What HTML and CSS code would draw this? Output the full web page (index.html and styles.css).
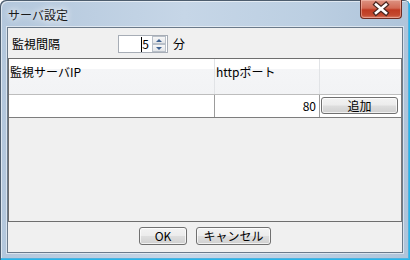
FILE: index.html
```html
<!DOCTYPE html>
<html>
    <head>
        <meta charset="utf-8" />
        <link rel="stylesheet" href="styles.css">
    </head>

    <body>
        <div class="window">
            <div class="titlebar">
                <span class="title">サーバ設定</span>
                <button class="close">
                    <svg width="42" height="19" viewBox="0 0 42 19">
                        <path d="M16 5.5 L26 14 M26 5.5 L16 14" stroke="#4a2620" stroke-width="5" stroke-linecap="square" fill="none" />
                        <path d="M16 5.5 L26 14 M26 5.5 L16 14" stroke="#fff" stroke-width="2.6" stroke-linecap="square" fill="none" />
                    </svg>
                </button>
            </div>

            <div class="client">
                <div class="toolbar">
                    <span class="label">監視間隔</span>
                    <div class="spin">
                        <div class="spin-value"><span class="caret"></span>5</div>
                        <div class="spin-buttons">
                            <span class="spin-up"><i></i></span>
                            <span class="spin-down"><i></i></span>
                        </div>
                    </div>
                    <span class="unit">分</span>
                </div>

                <div class="grid">
                    <div class="row header">
                        <div class="cell">監視サーバIP</div>
                        <div class="cell">httpポート</div>
                        <div class="cell"></div>
                    </div>
                    <div class="row data">
                        <div class="cell"></div>
                        <div class="cell num">80</div>
                        <div class="cell"><button class="btn add">追加</button></div>
                    </div>
                </div>

                <div class="footer">
                    <button class="btn ok">OK</button>
                    <button class="btn cancel">キャンセル</button>
                </div>
            </div>
        </div>
    </body>
</html>
```

FILE: styles.css
```css
body {
    margin: 0;
    font-family: "Noto Sans CJK JP", sans-serif;
    font-size: 12px;
    color: #000;
}

.window {
    width: 410px;
    height: 260px;
    box-sizing: border-box;
    padding: 0 7px 7px;
    display: flex;
    flex-direction: column;
    border-radius: 6px 6px 0 0;
    background: linear-gradient(to right, #b3c7dc, #c6d6e7 45%, #bccfe2 75%, #aec4da);
    box-shadow:
        inset 1px 1px 0 #4d5d6e,
        inset -1px -1px 0 #27b6ea,
        inset -2px -2px 0 #4fb2e0,
        inset 2px 2px 0 rgba(255, 255, 255, 0.55);
}

.titlebar {
    height: 27px;
    display: flex;
    align-items: flex-start;
}

.title {
    margin: 8px 0 0 1px;
    line-height: 14px;
    color: #1a1a1a;
    text-shadow: 0 0 6px #fff, 0 0 10px #fff;
}

.close {
    margin-left: auto;
    margin-right: 1px;
    width: 42px;
    height: 19px;
    padding: 0;
    border: 1px solid #6f2c22;
    border-top: none;
    border-radius: 0 0 4px 4px;
    background: linear-gradient(#dd9382, #d26a55 45%, #bf3a22 55%, #c44a30 85%, #d9806a);
    box-shadow: inset 0 0 0 1px rgba(255, 210, 200, 0.45);
    display: block;
}

.close svg {
    display: block;
    margin: -1px 0 0 -1px;
}

.client {
    flex: 1;
    display: flex;
    flex-direction: column;
    background: #f0f0f0;
    border: 1px solid #6b7a8a;
    box-shadow: 0 0 0 1px rgba(255, 255, 255, 0.5);
}

.toolbar {
    height: 30px;
    box-sizing: border-box;
    padding: 2px 0 0 4px;
    display: flex;
    align-items: center;
}

.label {
    width: 106px;
    line-height: 14px;
}

.spin {
    width: 50px;
    height: 18px;
    box-sizing: border-box;
    border: 1px solid #a7adb6;
    background: #fff;
    display: flex;
}

.spin-value {
    flex: 1;
    display: flex;
    align-items: center;
    justify-content: flex-end;
    padding-right: 2px;
    line-height: 14px;
}

.caret {
    width: 1px;
    height: 15px;
    background: #000;
}

.spin-buttons {
    width: 14px;
    margin: 0 1px;
    display: flex;
    flex-direction: column;
}

.spin-up,
.spin-down {
    flex: 1;
    box-sizing: border-box;
    border: 1px solid #b9c0c9;
    background: linear-gradient(#f7f7f7, #e3e5e8);
    display: flex;
    align-items: center;
    justify-content: center;
}

.spin-up i {
    border-left: 3px solid transparent;
    border-right: 3px solid transparent;
    border-bottom: 3px solid #3d6191;
}

.spin-down i {
    border-left: 3px solid transparent;
    border-right: 3px solid transparent;
    border-top: 3px solid #3d6191;
}

.unit {
    margin-left: 5px;
    line-height: 14px;
}

.grid {
    height: 164px;
    box-sizing: border-box;
    border: 1px solid #6e6e6e;
    border-right-color: #7a7a7a;
}

.row {
    display: grid;
    grid-template-columns: 206px 105px 1fr;
}

.cell {
    box-sizing: border-box;
    line-height: 14px;
}

.header {
    height: 35px;
    border-bottom: 1px solid #bdbdbd;
    background: linear-gradient(#fff 0, #fff 28%, #f4f5f7 28%, #f2f3f5 100%);
}

.header .cell {
    padding: 6px 0 0 1px;
    border-right: 1px solid #e1e3e6;
}

.header .cell:last-child {
    border-right: none;
}

.data {
    height: 22px;
    border-bottom: 1px solid #7d7d7d;
    background: #fff;
}

.data .cell {
    border-right: 1px solid #9c9c9c;
    padding-top: 4px;
}

.data .cell:last-child {
    border-right: none;
    padding: 2px 0 0 1px;
}

.num {
    text-align: right;
    padding-right: 3px;
}

.footer {
    height: 30px;
    box-sizing: border-box;
    padding-top: 5px;
    display: flex;
    justify-content: center;
    align-items: flex-start;
    gap: 9px;
}

.btn {
    height: 18px;
    box-sizing: border-box;
    padding: 0;
    font-family: "Noto Sans CJK JP", sans-serif;
    font-size: 12px;
    line-height: 14px;
    color: #000;
    border: 1px solid #707070;
    border-radius: 3px;
    background: linear-gradient(#f3f3f3, #ececec 48%, #dedede 52%, #d0d0d0);
    box-shadow: inset 0 0 0 1px rgba(255, 255, 255, 0.7);
}

.add {
    width: 77px;
    height: 17px;
    display: block;
}

.ok {
    width: 48px;
}

.cancel {
    width: 75px;
}
```
